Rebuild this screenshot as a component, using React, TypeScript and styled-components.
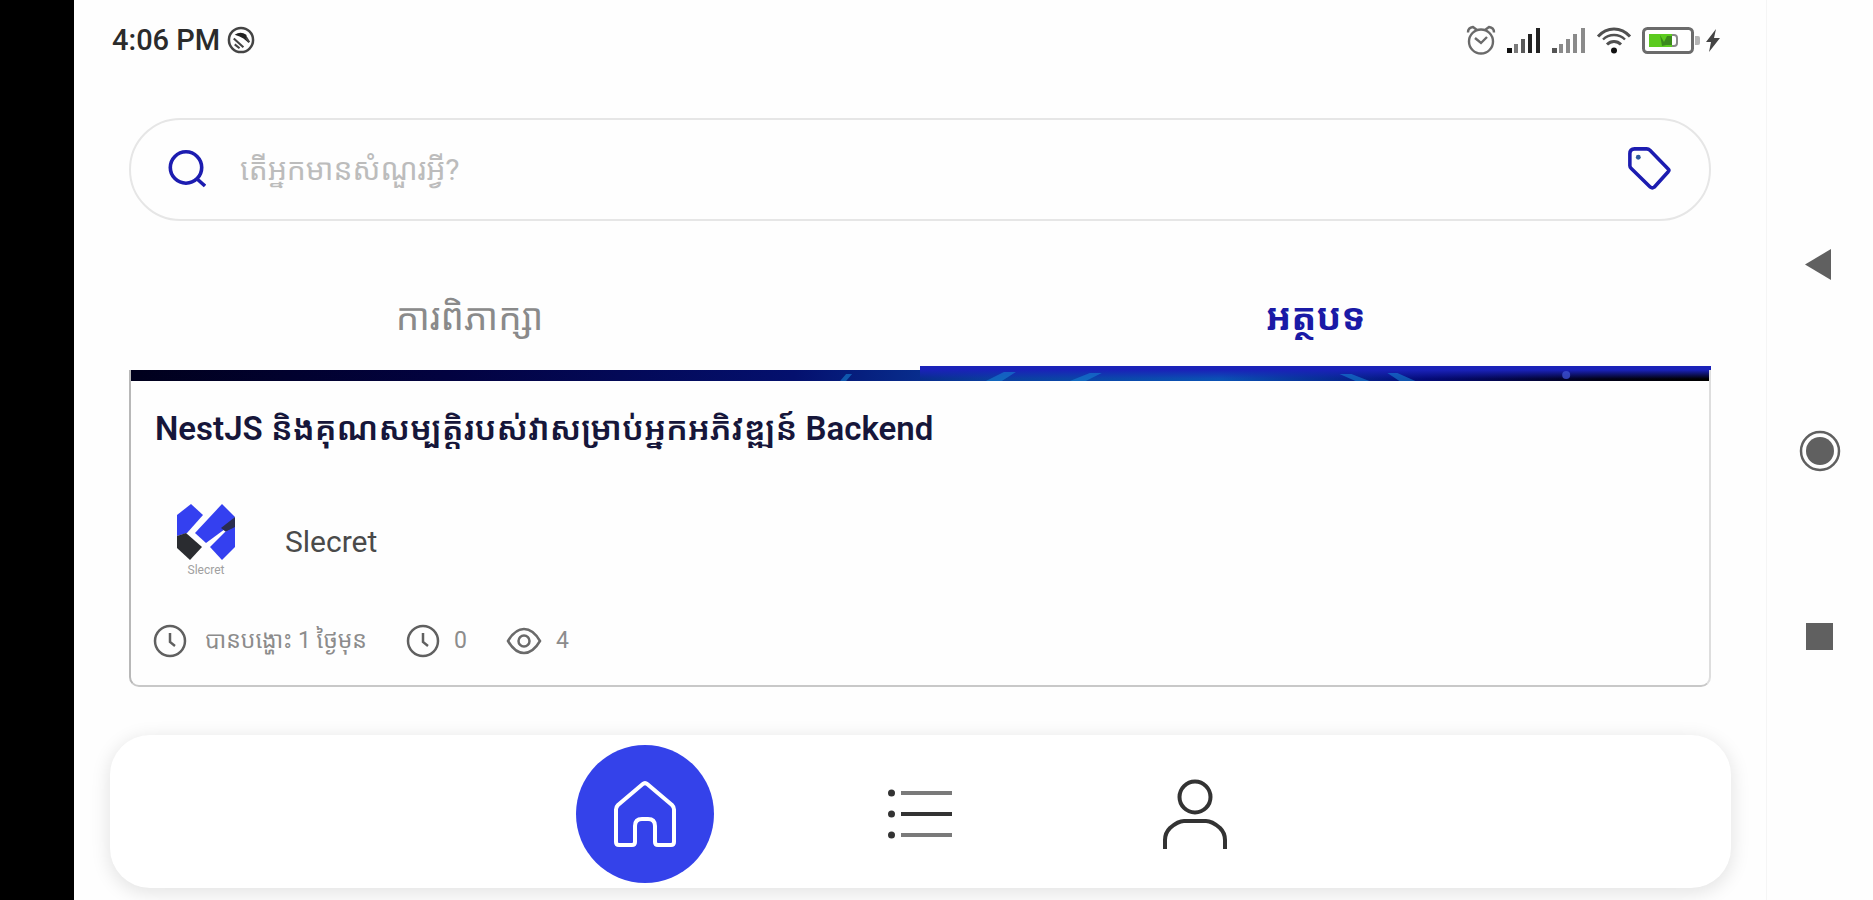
import React from 'react';
import styled, { createGlobalStyle } from 'styled-components';

const GlobalStyle = createGlobalStyle`
  * { box-sizing: border-box; }
  body {
    margin: 0;
    background: #fefefe;
    font-family: Roboto, "Noto Sans Khmer", "Khmer OS", "Noto Sans", sans-serif;
    color: #222;
  }
  button { font-family: inherit; border: 0; background: none; padding: 0; cursor: pointer; }
  svg { display: block; flex: none; }
`;

const Screen = styled.div`
  display: grid;
  grid-template-columns: 74px minmax(0, 1fr) 107px;
  min-height: 100vh;
`;

const Notch = styled.div`
  background: #000;
`;

const Phone = styled.div`
  display: flex;
  flex-direction: column;
  overflow: hidden;
`;

const StatusBar = styled.header`
  display: flex;
  align-items: center;
  justify-content: space-between;
  height: 80px;
  padding: 0 46px 0 38px;
`;

const StatusGroup = styled.div<{ $gap: number }>`
  display: flex;
  align-items: center;
  gap: ${(p) => p.$gap}px;
`;

const Time = styled.span`
  font-size: 29px;
  line-height: 40px;
  font-weight: 500;
  color: #2b2b2b;
`;

const Content = styled.main`
  display: flex;
  flex-direction: column;
  padding: 38px 55px 0;
`;

const SearchBox = styled.form`
  display: flex;
  align-items: center;
  gap: 34px;
  height: 103px;
  padding: 0 38px 2px 37px;
  border: 2px solid #e6e6e6;
  border-radius: 52px;
`;

const SearchInput = styled.input`
  flex: 1;
  min-width: 0;
  height: 60px;
  border: 0;
  outline: 0;
  padding: 2px 0 0;
  background: none;
  font-family: inherit;
  font-size: 30px;
  line-height: 58px;
  color: #333;
  &::placeholder { color: #bcbcbc; opacity: 1; }
`;

const Tabs = styled.div`
  display: grid;
  grid-template-columns: 1fr 1fr;
  margin-top: 49px;
`;

const Tab = styled.button<{ $active?: boolean }>`
  height: 100px;
  padding-right: ${(p) => (p.$active ? 0 : 110)}px;
  border-bottom: 4px solid ${(p) => (p.$active ? '#1a22b8' : 'transparent')};
  font-size: 37px;
  line-height: 40px;
  font-weight: ${(p) => (p.$active ? 700 : 400)};
  color: ${(p) => (p.$active ? '#1a1aa6' : '#8a8a8a')};
`;

const Card = styled.article`
  border: 2px solid;
  border-color: #bdbdbd #dedede #c8c8c8 #b8b8b8;
  border-top: 0;
  border-radius: 0 0 10px 10px;
  height: 317px;
`;

const Cover = styled.svg`
  width: 100%;
  height: 11px;
`;

const CardBody = styled.div`
  display: flex;
  flex-direction: column;
  padding: 26px 22px 0;
`;

const Title = styled.h2`
  margin: 0;
  padding-left: 2px;
  font-size: 33px;
  line-height: 44px;
  font-weight: 600;
  color: #16163a;
  white-space: nowrap;
`;

const Author = styled.div`
  display: flex;
  align-items: center;
  gap: 50px;
  margin-top: 53px;
  padding-left: 24px;
`;

const AuthorName = styled.span`
  padding-top: 2px;
  font-size: 30px;
  line-height: 40px;
  color: #4a4a4a;
`;

const Meta = styled.div`
  display: flex;
  align-items: center;
  gap: 39px;
  margin-top: 46px;
`;

const MetaItem = styled.span<{ $gap: number }>`
  display: flex;
  align-items: center;
  gap: ${(p) => p.$gap}px;
  font-size: 23px;
  line-height: 34px;
  color: #8c8c8c;
`;

const BottomNav = styled.nav`
  display: flex;
  align-items: center;
  justify-content: center;
  height: 153px;
  margin: 48px 35px 12px 36px;
  padding: 4px 2px 0 0;
  border-radius: 40px;
  background: #fff;
  box-shadow: 0 4px 18px 2px rgba(0, 0, 0, 0.1);
`;

const NavSlot = styled.div`
  display: flex;
  justify-content: center;
  width: 275px;
`;

const NavButton = styled.button<{ $active?: boolean }>`
  display: flex;
  align-items: center;
  justify-content: center;
  width: 138px;
  height: 138px;
  border-radius: 50%;
  color: ${(p) => (p.$active ? '#fff' : '#333')};
  background: ${(p) => (p.$active ? '#3442ea' : 'none')};
`;

const SystemBar = styled.aside`
  display: flex;
  flex-direction: column;
  align-items: center;
  justify-content: center;
  padding: 1px 1px 0 0;
  border-left: 1px solid #f5f5f5;
`;

const SystemButton = styled.button`
  display: flex;
  align-items: center;
  justify-content: center;
  width: 100%;
  height: 186px;
  color: #606060;
`;

const RotateIcon = () => (
  <svg width="28" height="28" viewBox="0 0 29 29" fill="none" stroke="#444">
    <circle cx="14.5" cy="14.5" r="12.5" strokeWidth="2.6" />
    <path d="M8 9q6-4 12 0l2 8-5-4-4-2z" fill="#222" stroke="none" />
    <path d="M7 13l10 9M8 19l5 4M20 12l3 5" strokeWidth="2.200" />
  </svg>
);

const AlarmIcon = () => (
  <svg width="30" height="30" viewBox="0 0 30 30" fill="none" stroke="#6a6a6a" strokeWidth="2.400">
    <circle cx="15" cy="16.500" r="12" />
    <path d="M2 7.500q0-5 5-5.500l4 3M28 7.500q0-5-5-5.500l-4 3M9 13l6 5 6-6" />
  </svg>
);

const SignalIcon = ({ strong }: { strong?: boolean }) => (
  <svg width="35" height="26" viewBox="0 0 35 26" fill={strong ? '#222' : '#8a8a8a'}>
    <path d="M1 21h5v5H1z" fill={strong ? '#111' : '#555'} />
    <path d="M8 17h4v9H8z" opacity={strong ? 0.6 : 1} />
    <path d="M15 12h4v14h-4z" opacity={strong ? 0.75 : 1} />
    <path d="M22 7h4v19h-4z" />
    <path d="M30 1h4v25h-4z" />
  </svg>
);

const WifiIcon = () => (
  <svg width="36" height="27" viewBox="0 0 36 27" fill="none" stroke="#505050" strokeWidth="3">
    <path d="M2 9.500C11-.5 25-.5 34 9.500" />
    <path d="M7 12.500c6-6 16-6 22 0" strokeWidth="2.400" />
    <path d="M11 17.500c4-4 10-4 14 0" />
    <circle cx="18" cy="23.500" r="3" fill="#111" stroke="none" />
  </svg>
);

const BatteryIcon = () => (
  <svg width="58" height="27" viewBox="0 0 58 27">
    <rect x="1.500" y="1.500" width="49" height="24" rx="4" fill="#fff" stroke="#6b6b6b" strokeWidth="3" />
    <path d="M53 9h3q2 0 2 2v5q0 2-2 2h-3z" fill="#b5b5b5" />
    <rect x="7" y="7" width="23" height="13" fill="#5ccb1f" />
    <path d="M18 8l4 7 3-6h5v9h-6l-4 1z" fill="#3c8a1c" />
    <path d="M30 8h2q3 0 3 3v5q0 3-3 3h-2" fill="none" stroke="#888" strokeWidth="2" />
  </svg>
);

const BoltIcon = () => (
  <svg width="14" height="23" viewBox="0 0 14 23" fill="#444">
    <path d="M10 0L0 13h5L3 23l11-14H8z" />
  </svg>
);

const SearchIcon = () => (
  <svg width="38" height="38" viewBox="0 0 38 38" fill="none" stroke="#1c1cb0" strokeWidth="3.600">
    <circle cx="18" cy="17.500" r="15.700" />
    <path d="M28 28l9 8" />
  </svg>
);

const TagIcon = () => (
  <svg width="43" height="43" viewBox="0 0 46 46" fill="none" stroke="#1c1cb0" strokeWidth="3.800" strokeLinejoin="round">
    <path d="M7 2h13q2 0 3.500 1.500L43 23.500q1.500 1.500 0 3L28 43q-2 1.500-4 0L3.500 23Q2 21.500 2 20V7q0-5 5-5z" />
    <circle cx="11" cy="11" r="2.600" fill="#2c5a9c" stroke="none" />
  </svg>
);

const LogoIcon = () => (
  <svg width="58" height="56" viewBox="0 0 58 56" fill="#3440f0">
    <path d="M14 0L26 11 10 29 0 32V11z" />
    <path d="M45 0L58 13 48 25 29 39 18 29z" />
    <path d="M58 13v11l-9 4-5-4z" fill="#2a2d50" />
    <path d="M58 23v20L45 56 33 43 48 28z" />
    <path d="M0 32l9-3 16 14-12 13L0 44z" fill="#2a2c30" />
  </svg>
);

const Logo = styled.div`
  display: flex;
  flex-direction: column;
  align-items: center;
  width: 58px;
  gap: 2px;
`;

const LogoName = styled.span`
  font-size: 12px;
  line-height: 16px;
  color: #a0a0a0;
`;

const ClockIcon = () => (
  <svg width="34" height="34" viewBox="0 0 34 34" fill="none" stroke="#606060" strokeWidth="2.500">
    <circle cx="17" cy="17" r="15" />
    <path d="M17 9v9l5 4" />
  </svg>
);

const EyeIcon = () => (
  <svg width="36" height="28" viewBox="0 0 36 28" fill="none" stroke="#6a6a6a" strokeWidth="2.500">
    <path d="M2 14Q9 2 18 2t16 12Q27 26 18 26T2 14z" />
    <circle cx="18" cy="14" r="5.500" />
  </svg>
);

const HomeIcon = () => (
  <svg width="62" height="66" viewBox="0 0 62 66" fill="none" stroke="currentColor" strokeWidth="4" strokeLinejoin="round">
    <path d="M28.500 3.200Q31 1 33.500 3.200L58 24q2 2 2 4.500V61q0 3-3 3H44q-3 0-3-3V45q0-7-7-7h-6q-7 0-7 7v16q0 3-3 3H5q-3 0-3-3V28.500Q2 26 4 24z" />
  </svg>
);

const ListIcon = () => (
  <svg width="64" height="50" viewBox="0 0 64 50" fill="currentColor">
    <circle cx="3.500" cy="4" r="3.500" />
    <circle cx="3.500" cy="25" r="3.500" />
    <circle cx="3.500" cy="46" r="3.500" />
    <path d="M13 2h51v4H13zM13 44h51v4H13z" opacity="0.650" />
    <path d="M13 23h51v4H13z" />
  </svg>
);

const UserIcon = () => (
  <svg width="66" height="70" viewBox="0 0 66 70" fill="none" stroke="currentColor" strokeWidth="4">
    <circle cx="33" cy="18" r="15.500" />
    <path d="M3 70V61Q3 54 8 49 16 42 22 42H44q6 0 14 7 5 5 5 12v9" />
  </svg>
);

export default function App() {
  return (
    <>
      <GlobalStyle />
      <Screen>
        <Notch />
        <Phone>
          <StatusBar>
            <StatusGroup $gap={7}>
              <Time>4:06 PM</Time>
              <RotateIcon />
            </StatusGroup>
            <StatusGroup $gap={10}>
              <AlarmIcon />
              <SignalIcon strong />
              <SignalIcon />
              <WifiIcon />
              <StatusGroup $gap={6}>
                <BatteryIcon />
                <BoltIcon />
              </StatusGroup>
            </StatusGroup>
          </StatusBar>
          <Content>
            <SearchBox onSubmit={(e) => e.preventDefault()}>
              <SearchIcon />
              <SearchInput type="text" aria-label="ស្វែងរក" placeholder="តើអ្នកមានសំណួរអ្វី?" />
              <button type="button" aria-label="Tag">
                <TagIcon />
              </button>
            </SearchBox>
            <Tabs role="tablist">
              <Tab role="tab" aria-selected={false}>ការពិភាក្សា</Tab>
              <Tab role="tab" aria-selected $active>អត្ថបទ</Tab>
            </Tabs>
            <Card>
              <Cover viewBox="0 0 1580 11" preserveAspectRatio="none" aria-hidden="true">
                <defs>
                  <linearGradient id="cover">
                    <stop offset="0" stopColor="#00001c" />
                    <stop offset="0.200" stopColor="#020240" />
                    <stop offset="0.420" stopColor="#04106e" />
                    <stop offset="0.550" stopColor="#0a3fa0" />
                    <stop offset="0.690" stopColor="#0a52b4" />
                    <stop offset="0.820" stopColor="#040a78" />
                    <stop offset="0.930" stopColor="#010118" />
                    <stop offset="1" stopColor="#000" />
                  </linearGradient>
                  <linearGradient id="glow" x2="0" y2="1">
                    <stop offset="0" stopColor="#1a22b8" />
                    <stop offset="1" stopColor="#1a22b8" stopOpacity="0" />
                  </linearGradient>
                </defs>
                <path d="M0 0h1580v11H0z" fill="url(#cover)" />
                <path d="M790 0h790v9H790z" fill="url(#glow)" />
                <path d="M710 11l6-7h6l-6 7zM856 11l18-9h12l-14 9zM940 11l20-8h12l-16 8zM1210 4h12l18 7h-14zM1258 3h10l18 8h-16z" fill="#1681d0" opacity="0.600" />
                <circle cx="1437" cy="5" r="4" fill="#3c50d0" opacity="0.800" />
              </Cover>
              <CardBody>
                <Title>NestJS និងគុណសម្បត្តិរបស់វាសម្រាប់អ្នកអភិវឌ្ឍន៍ Backend</Title>
                <Author>
                  <Logo>
                    <LogoIcon />
                    <LogoName>Slecret</LogoName>
                  </Logo>
                  <AuthorName>Slecret</AuthorName>
                </Author>
                <Meta>
                  <MetaItem $gap={18}>
                    <ClockIcon />
                    បានបង្ហោះ 1 ថ្ងៃមុន
                  </MetaItem>
                  <MetaItem $gap={14}>
                    <ClockIcon />0
                  </MetaItem>
                  <MetaItem $gap={14}>
                    <EyeIcon />4
                  </MetaItem>
                </Meta>
              </CardBody>
            </Card>
          </Content>
          <BottomNav>
            <NavSlot>
              <NavButton $active aria-label="Home"><HomeIcon /></NavButton>
            </NavSlot>
            <NavSlot>
              <NavButton aria-label="List"><ListIcon /></NavButton>
            </NavSlot>
            <NavSlot>
              <NavButton aria-label="Profile"><UserIcon /></NavButton>
            </NavSlot>
          </BottomNav>
        </Phone>
        <SystemBar>
          <SystemButton aria-label="Back">
            <svg width="30" height="31" viewBox="0 0 30 31" fill="currentColor"><path d="M26 0v31L0 15.500z" /></svg>
          </SystemButton>
          <SystemButton aria-label="Home screen">
            <svg width="42" height="42" viewBox="0 0 42 42" fill="currentColor">
              <circle cx="21" cy="21" r="19" fill="none" stroke="currentColor" strokeWidth="2.500" />
              <circle cx="21" cy="21" r="14" />
            </svg>
          </SystemButton>
          <SystemButton aria-label="Recent apps">
            <svg width="27" height="27" viewBox="0 0 27 27" fill="currentColor"><path d="M0 0h27v27H0z" /></svg>
          </SystemButton>
        </SystemBar>
      </Screen>
    </>
  );
}
